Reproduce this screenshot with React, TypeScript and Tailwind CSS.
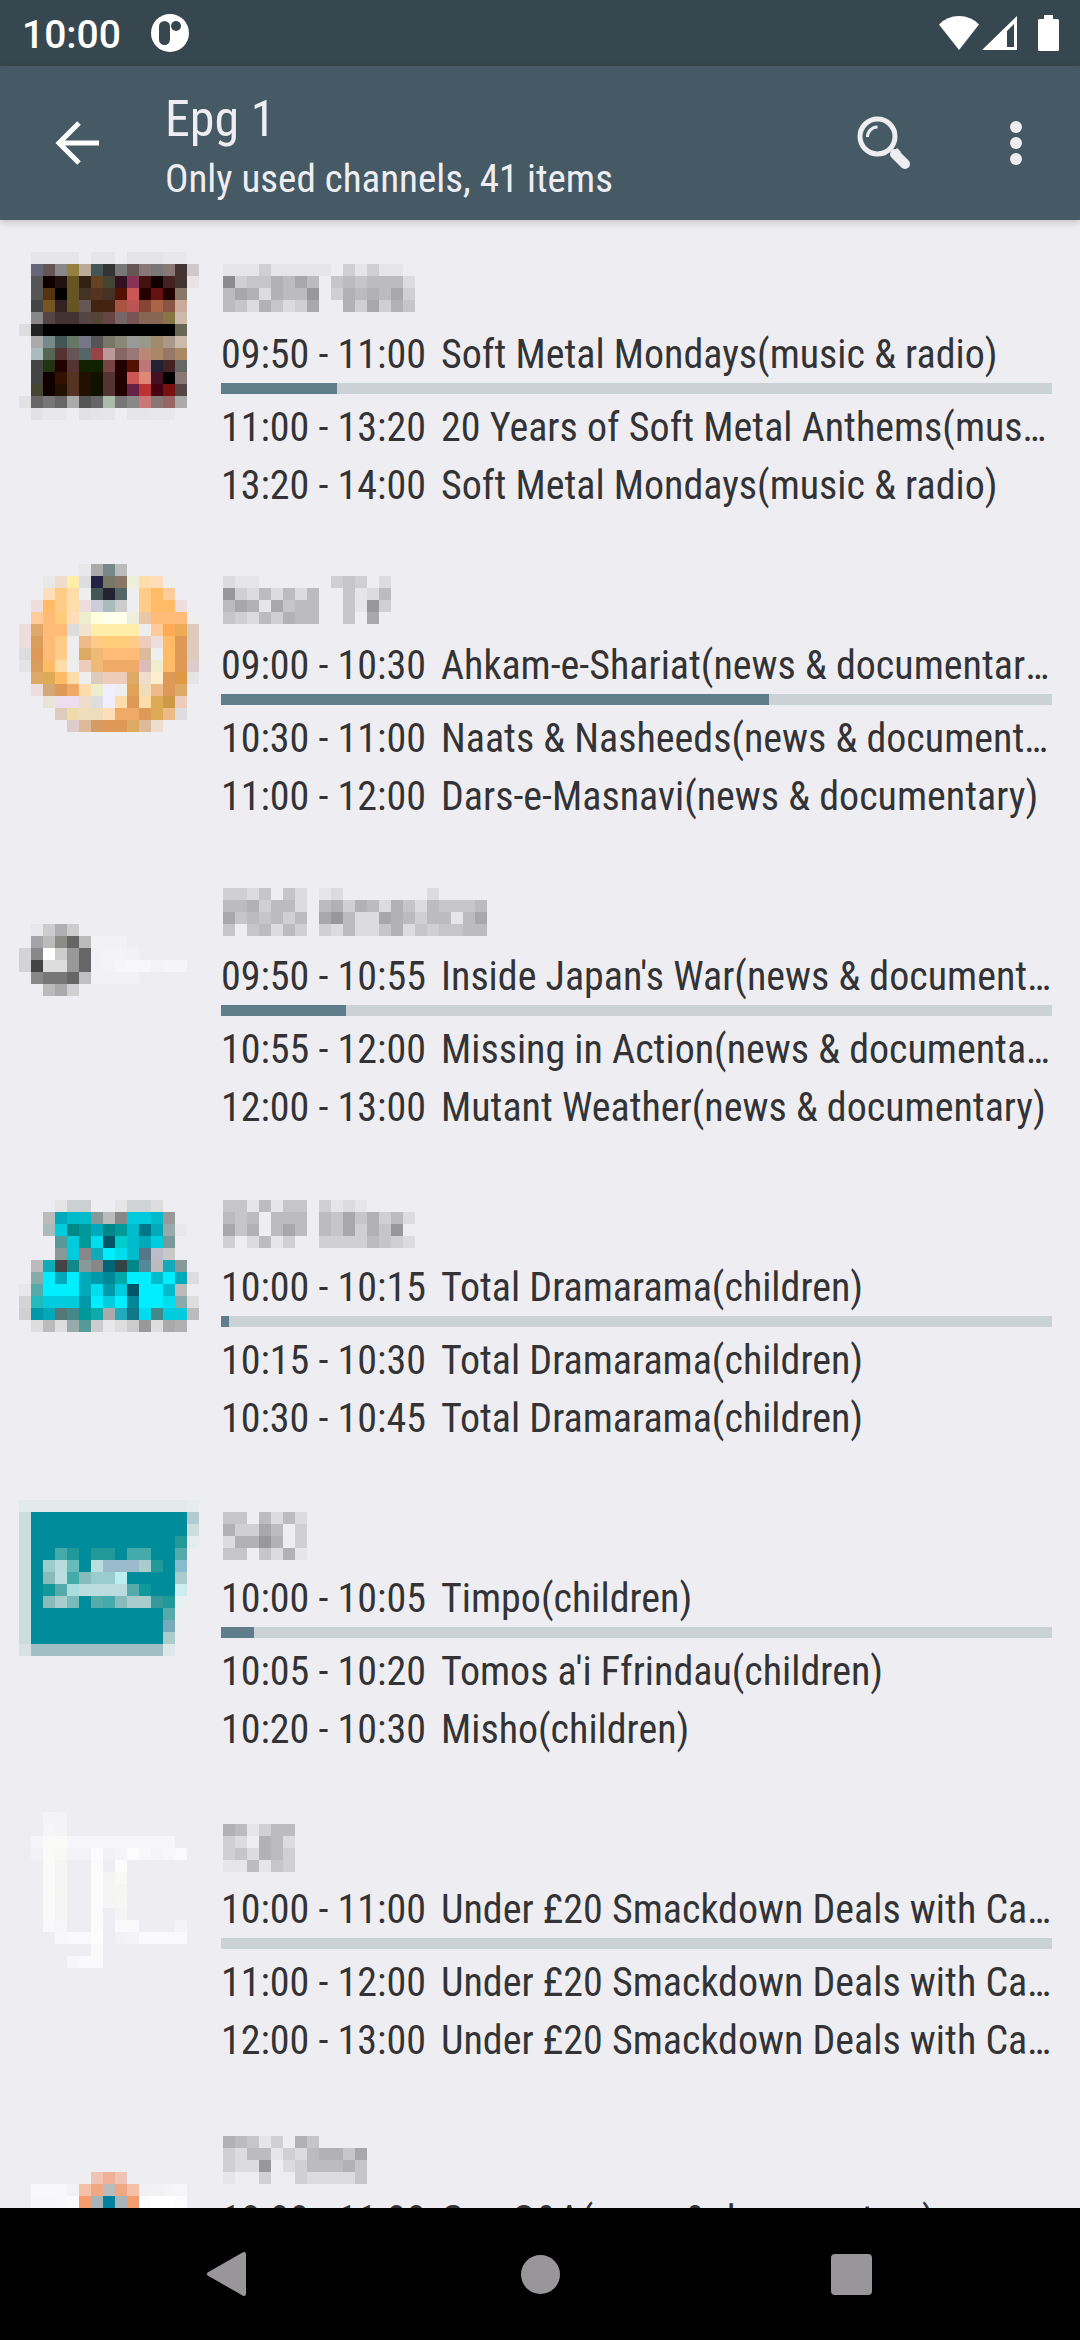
const CELL = 12;
const TEAL = '008c9b';

// One shade per digit, light to dark
const SHADES = ['', 'e6e6ea', 'dcdce0', 'd0d0d4', 'c6c6ca', 'bcbcc0', 'b2b2b6', 'a8a8ac', '98989c', '8c8c90'];

type Programme = { time: string; title: string };

type Channel = {
  name: string[];
  icon: string[];
  progress: number;
  programmes: Programme[];
};

const channels: Channel[] = [
  {
    name: ['111311111 31311 ', '93446575 4545552', '57626558 3656573', '54264237  637364'],
    icon: [
      '. e6e6e8 e6e6e8 e6e6e8 e6e6e8 . e6e6e8 e6e6e8 . e4e4e6 e4e4e6 e4e4e6 e8e8ea e8e8ea .',
      '. 667 655 888 958040 ba9 455 333 777 655 877 777 877 433 d0c8c8',
      '. 555 100 211 652 321 642 443 312 835 411 100 422 433 e8e4e4',
      '. 555 531 000 652 432 532 432 510 c55 200 611 200 876 .',
      '. 444 752 322 652 655 421 421 a54 b55 843 a64 854 ca9 .',
      '. 888 544 433 433 544 543 644 766 755 865 865 874 cba .',
      'ddd 222 000 000 000 000 000 000 000 000 000 000 000 665 .',
      '. aaa 788 455 676 778 555 776 887 999 998 a08c6c a98 cba .',
      '. abb 565 533 655 566 944 b99 866 977 b87 a86 976 a86 .',
      '. 444 231 200 533 120 120 744 200 510 b77 223 422 666 .',
      '. 444 100 310 532 210 110 533 200 c55 d87 412 000 877 .',
      '. 443 100 210 532 210 110 533 200 624 b33 401 711 544 .',
      'e2e2e2 666 777 666 aaa 555 666 aba 777 888 c77 877 966 aaa .',
      '. e2e2e4 e8e8ea e8e8ea . e2e2e4 e4e4e6 e6e6e8 . e6e6e8 e6e6e8 e8e8ea e8e8ea . .',
    ],
    progress: 14,
    programmes: [
      { time: '09:50 - 11:00', title: 'Soft Metal Mondays(music & radio)' },
      { time: '11:00 - 13:20', title: '20 Years of Soft Metal Anthems(music & radio)' },
      { time: '13:20 - 14:00', title: 'Soft Metal Mondays(music & radio)' },
    ],
  },
  {
    name: ['211      343 2', '83252525  4125', '57617455  4183', '43253655  4 7 '],
    icon: [
      '. . . . . e8e8ea aaa 788 bbb . . . . . .',
      '. . e8e8e8 edc fea ddd 224 776 876 eed fda fdb eee . .',
      '. . fdb fc8 fda eee 455 223 566 eee fc8 fb6 fc9 . .',
      '. edd fb6 fc8 fda edd ccd abb ccc eee fc8 fb6 fb6 edd .',
      '. fc9 fb7 fc7 fdb eec ffd ffe ffe eed e8c8a8 fb7 fb7 fb7 eee',
      'edd e0a868 fb7 fb7 ddd f0e4d0 fea fea fea fea eee fc9 fa5 ea5 dcb',
      'edd dc9c5c fb7 fc8 eee eb8 fc8 fc7 fc7 fc8 ecb edd fb6 d95 dcb',
      'ddd d95 fb7 fc8 eee da6 eb7 fb7 fb7 fb7 db9 eee fb6 d95 dcb',
      'e4e4e4 dc9c5c fb6 fda eee ecb eb7 ea6 ea6 ea6 dbb eec fb6 d95 dcc',
      '. da6 da5 fb6 fda eee dcb ecb ecb da6 edc fec d95 d94 e4e4e4',
      '. edd d4a878 d95 ea6 fda eec eef eee e0a458 f0dcb8 eb8 d95 da6 .',
      '. . e8e4d8 ede ede edc ddd eef fda d95 fda da5 c94 ecb .',
      '. . . dcb eda edb edb fdb ea6 ea6 d95 da5 eb8 ddd .',
      '. . . . dcc db9 d49c64 d95 d95 da6 db9 edc . . .',
    ],
    progress: 66,
    programmes: [
      { time: '09:00 - 10:30', title: 'Ahkam-e-Shariat(news & documentary)' },
      { time: '10:30 - 11:00', title: 'Naats & Nasheeds(news & documentary)' },
      { time: '11:00 - 12:00', title: 'Dars-e-Masnavi(news & documentary)' },
    ],
  },
  {
    name: ['3324 42 12       2    ', '5563552 56365264254445', '7454535 78522765355157', '4 45253 32522462434455'],
    icon: [
      '.',
      '.',
      '.',
      '.',
      '. e8e8ec ccc b0b0b2 ccc',
      '. a4a4a8 bbb 8c8c88 666 bbb f2f2f4 f2f2f4 f2f2f4',
      'd4d4d8 888 fff ccc 999 666 f2f2f6 f4f4f8 f4f4f8 f2f2f4',
      'd4d4d8 444 ddd ddd 999 666 f2f2f6 f4f4f8 f6f6fa f8f8fa f8f8fa f3f3f6 f5f5f8 f5f5f8',
      '. 888 777 777 666 c0c0c2 f2f2f4 f2f2f4 f2f2f4 f2f2f4',
      '. . bbb aaa d0d0d2',
    ],
    progress: 15,
    programmes: [
      { time: '09:50 - 10:55', title: "Inside Japan's War(news & documentary)" },
      { time: '10:55 - 12:00', title: 'Missing in Action(news & documentary)' },
      { time: '12:00 - 13:00', title: 'Mutant Weather(news & documentary)' },
    ],
  },
  {
    name: ['4415144 3121    ', '545 555 54746352', '746 575 5473648 ', '3 2513  33335432'],
    icon: [
      '.',
      '. . . e4e4e4 ccd0d0 ccd0d0 . . e6e6e6 d0d4d4 d0d4d4 ddd . . .',
      '. . bbb 0ab 0bc 0bc 899 bbb 888 0cd 0cd 0bc 999 . .',
      '. . abb 0cd 088 099 0ab 088 099 0bc 078 0ab 9aa e8e8ea .',
      '. . . 599 0cd 099 0de 056 0cc 0bc 0ab 0cd 799 . .',
      '. . . 899 0cd 888 1ab 0ef 0de 0bc 578 bbc c8c8c8 . .',
      '. bbb 1ab 444 188 899 888 067 344 088 589 bbb 1ab 899 .',
      '. 8aa 0ef 0ab 0ef 0ab 09a 089 0aa 0ef 0ef 0bc 0ef 0ab ddd',
      'e8e8ea 5aa 0ef 0ef 0ef 0ab 0de 09a 0cd 056 0ef 0ef 0bc bbb .',
      'd4d4d4 2bb 0cd 0cd 0cd 09a 0ef 0cd 0ef 089 0ef 0ef 0de 8aa ddd',
      'd0d0d0 09a 0ab 577 488 099 1aa aaa 2ab 178 0de 488 0cd 0cd bbb',
      '. ddd bbb ddd 9aa 599 ccc e8e8ea ddd ccc 999 ddd aaa b0b0b0 .',
    ],
    progress: 1,
    programmes: [
      { time: '10:00 - 10:15', title: 'Total Dramarama(children)' },
      { time: '10:15 - 10:30', title: 'Total Dramarama(children)' },
      { time: '10:30 - 10:45', title: 'Total Dramarama(children)' },
    ],
  },
  {
    name: ['44 5252', '63375 3', '26686 3', '44 4261'],
    icon: [
      'e4eaec e4eaec e4eaec e4eaec e4eaec e4eaec e4eaec e4eaec e4eaec e4eaec e4eaec e4eaec e4eaec e4eaec e8ecee',
      'cdd T T T T T T T T T T T T T b0ccd0',
      'cdd T T T T T T T T T T T T T cdd',
      'cdd T T T T T T T T T T T T 299 e6ecee',
      'cdd T T 4aa 299 T 299 299 T 4aa 4aa T T 5aa .',
      'cdd T 9cc b8dcdc 6bb T bdd 9bc 9bc 9bc acc 299 T 8bc .',
      'cdd T 8bb bdd 4aa 8bb 9cc 9cc bee T T T T acc .',
      'cdd T 199 5aa add bdd bdd bdd bdd 5aa 199 T T cee .',
      'cdd T 8bb acc 7bb T 5aa 4aa 8bb acc acc 399 299 e8f0f0 .',
      'cdd T T T T T T T T T T T 5aa . .',
      'cdd T T T T T T T T T T T 7ab . .',
      'cdd T T T T T T T T T T T acc . .',
      'd8e2e4 a0bec4 a0bec4 a0bec4 a0bec4 a0bec4 a0bec4 a0bec4 a0bec4 a0bec4 a0bec4 a0bec4 dde6e8 . .',
    ],
    progress: 4,
    programmes: [
      { time: '10:00 - 10:05', title: 'Timpo(children)' },
      { time: '10:05 - 10:20', title: "Tomos a'i Ffrindau(children)" },
      { time: '10:20 - 10:30', title: 'Misho(children)' },
    ],
  },
  {
    name: ['651355', '32 652', '342653', '115143'],
    icon: [
      '. . f4f4f8 f3f3f6',
      '. . f6f6f8 f4f4f6',
      '. f5f5f8 fafaf8 fafaf8 f6f6fa f6f6fa f6f6fa f6f6fa f6f6fa f6f6fa f6f6fa f6f6fa f6f6fa',
      '. f2f2f6 fafaf8 f8f8f6 f3f3f5 f3f3f5 fcfcfc f2f2f4 f5f5f8 fcfcfc f8f8fa f5f5f8 f7f7fa fbfbff',
      '. . fafafa f5f5f6 . . fbfbfb . fcfcfc',
      '. . fafafa f5f5f5 . . fbfbfb f4f4f4 f8f8f6',
      '. . fafaf8 f5f5f5 . . fbfbfb f5f5f5 f5f5f3',
      '. . fafafa f5f5f6 . . fbfbfb f5f5f5 f6f6f4',
      '. . fafafa f5f5f6 . . fbfbfb . f4f4f4',
      '. . f8f8fa f6f6f8 . . fbfbfb . fafafa fafafa . . . f4f4f6',
      '. . . f8f8fc f9f9fc f9f9fc fdfdfb . f2f2f4 f4f4f6 f9f9fe f9f9fe f9f9fe f9f9fe',
      '. . . . . . fafaf8',
      '. . . . f7f7fb f9f9fb fafafa',
    ],
    progress: 0,
    programmes: [
      { time: '10:00 - 11:00', title: 'Under £20 Smackdown Deals with Caroline' },
      { time: '11:00 - 12:00', title: 'Under £20 Smackdown Deals with Caroline' },
      { time: '12:00 - 13:00', title: 'Under £20 Smackdown Deals with Caroline' },
    ],
  },
  {
    name: ['65413 64    ', '325513256647', '3228 2355564', '1  3  322224'],
    icon: [
      '.',
      '.',
      '.',
      '.',
      '. . . . . . f0c4b4 f0b098 f0c4b4',
      '. f8f8fa f8f8fa f8f8fa f2f2f4 f4c0a8 f0a884 bbb f0a884 f4c0a8 f1f1f3 f2f2f4 f4f4f6 f6f6f8',
      '. f7f7f9 f7f7f9 f8f8fa fafafa f49c6c a8b4b8 00809c a8b4b8 f49c6c fcfcfc fff fff fcfcfc',
    ],
    progress: 0,
    programmes: [
      { time: '10:00 - 11:00', title: 'Gen Q&A(news & documentary)' },
      { time: '11:00 - 12:00', title: 'Gen Q&A(news & documentary)' },
      { time: '12:00 - 13:00', title: 'Gen Q&A(news & documentary)' },
    ],
  },
];

type MosaicProps = { rows: string[][]; x: number; y: number; className: string };

const Mosaic = ({ rows, x, y, className }: MosaicProps) => (
  <svg className={className} shapeRendering="crispEdges" aria-hidden="true">
    <g transform={`translate(${x} ${y})`}>
      {rows.map((row, r) =>
        row.map((color, c) =>
          color ? (
            <rect key={`${r}-${c}`} x={c * CELL} y={r * CELL} width={CELL} height={CELL} fill={`#${color}`} />
          ) : null
        )
      )}
    </g>
  </svg>
);

const iconCells = (rows: string[]) =>
  rows.map((row) => row.split(' ').map((c) => (c === '.' ? '' : c === 'T' ? TEAL : c)));

const nameCells = (rows: string[]) => rows.map((row) => row.split('').map((c) => SHADES[Number(c)]));

const ProgrammeLine = ({ time, title }: Programme) => (
  <div className="flex h-[58px] leading-[60px]">
    <span className="w-[220px] shrink-0 whitespace-nowrap">{time}</span>
    <span className="min-w-0 flex-1 truncate">{title}</span>
  </div>
);

// The mosaic cells sit on a 12px screen grid, so they move 1px per 311px row
const ChannelRow = ({ channel, index }: { channel: Channel; index: number }) => (
  <li className="flex h-[311px] shrink-0 gap-[22px] pr-7 pl-[19px]">
    <Mosaic rows={iconCells(channel.icon)} x={0} y={32 + index} className="h-[260px] w-[180px] shrink-0" />
    <div className="min-w-0 flex-1">
      <Mosaic rows={nameCells(channel.name)} x={2} y={44 + index} className="block h-[105px] w-full" />
      <ProgrammeLine {...channel.programmes[0]} />
      <div className="mb-1 h-[11px] bg-[#cad2d5]">
        <div className="h-full bg-[#607d8b]" style={{ width: `${channel.progress}%` }} />
      </div>
      <ProgrammeLine {...channel.programmes[1]} />
      <ProgrammeLine {...channel.programmes[2]} />
    </div>
  </li>
);

const StatusBar = () => (
  <div className="flex h-[66px] shrink-0 items-center bg-[#37474f] pr-5 pl-[22px] text-white">
    <span className="pt-1 font-['Roboto'] text-[39px] leading-none font-medium">10:00</span>
    <svg className="ml-[30px] size-[38px]" viewBox="0 0 38 38">
      <circle cx="19" cy="19" r="19" fill="#fff" />
      <rect x="8" y="7" width="11" height="24" rx="5.5" fill="#37474f" />
      <circle cx="25" cy="12" r="5" fill="#37474f" />
    </svg>
    <div className="ml-auto flex items-center">
      <svg className="h-9 w-[42px]" viewBox="0 0 42 36" fill="#fff">
        <path d="M1 9.500Q9 1 21 1T41 9.500L21 35Z" />
      </svg>
      <svg className="ml-[2px] h-9 w-[36px]" viewBox="0 0 36 36">
        <path d="M35 1V35H0ZM32 9L25 16V32H32Z" fill="#fff" fillRule="evenodd" />
      </svg>
      <svg className="ml-5 h-9 w-[22px]" viewBox="0 0 22 36" fill="#fff">
        <path d="M6 0H15V4H19.500Q21 4 21 5.500V34.500Q21 36 19.500 36H1.500Q0 36 0 34.500V5.500Q0 4 1.500 4H6Z" />
      </svg>
    </div>
  </div>
);

const AppBar = () => (
  <header className="relative z-10 flex h-[154px] shrink-0 items-center bg-[#455a64] pr-5 pl-[33px] text-[#eeeef2] shadow-[0_2px_8px_rgba(0,0,0,0.2)]">
    <button aria-label="Back" className="flex size-[88px] items-center justify-center">
      <svg className="size-11" viewBox="0 0 44 44" fill="none" stroke="#fff" strokeWidth="5">
        <path d="M24 2L4 22L24 42M4 22H44" />
      </svg>
    </button>
    <div className="ml-11 min-w-0 flex-1 pt-3">
      <h1 className="text-[50px] leading-[60px]">Epg 1</h1>
      <p className="truncate text-[39px] leading-[60px]">Only used channels, 41 items</p>
    </div>
    <button aria-label="Search" className="flex size-[88px] items-center justify-center">
      <svg className="size-[54px]" viewBox="0 0 54 54" fill="none" stroke="currentColor">
        <circle cx="20.500" cy="20.500" r="17.500" strokeWidth="5" />
        <path d="M10.500 21A10 10 0 0 1 20.500 11" strokeWidth="3" />
        <path d="M38 38L48 48" strokeWidth="10" strokeLinecap="round" />
        <path d="M33 39L40 32L44 36L37 43Z" fill="currentColor" stroke="none" />
      </svg>
    </button>
    <button aria-label="More options" className="ml-11 flex size-[88px] items-center justify-center">
      <svg className="h-11 w-3" viewBox="0 0 12 44" fill="currentColor">
        <circle cx="6" cy="6" r="6" />
        <circle cx="6" cy="22" r="6" />
        <circle cx="6" cy="38" r="6" />
      </svg>
    </button>
  </header>
);

const NavBar = () => (
  <nav className="flex h-[132px] shrink-0 items-center justify-center bg-black">
    <button aria-label="Back" className="flex w-[311px] justify-center">
      <svg className="size-12" viewBox="0 0 48 48" fill="#999699" stroke="#999699" strokeWidth="4" strokeLinejoin="round">
        <path d="M39 4V44L4 24Z" />
      </svg>
    </button>
    <button aria-label="Home" className="flex w-[311px] justify-center">
      <span className="size-[39px] rounded-full bg-[#999699]" />
    </button>
    <button aria-label="Recent apps" className="flex w-[311px] justify-center">
      <span className="size-[41px] rounded-[4px] bg-[#999699]" />
    </button>
  </nav>
);

const App = () => (
  <div className="flex h-screen flex-col bg-[#eeeef2] font-['Roboto_Condensed','Roboto',sans-serif]">
    <StatusBar />
    <AppBar />
    <ul className="flex min-h-0 flex-1 flex-col overflow-hidden text-[40px] text-[#333336]">
      {channels.map((channel, index) => (
        <ChannelRow key={index} channel={channel} index={index} />
      ))}
    </ul>
    <NavBar />
  </div>
);

export default App;
